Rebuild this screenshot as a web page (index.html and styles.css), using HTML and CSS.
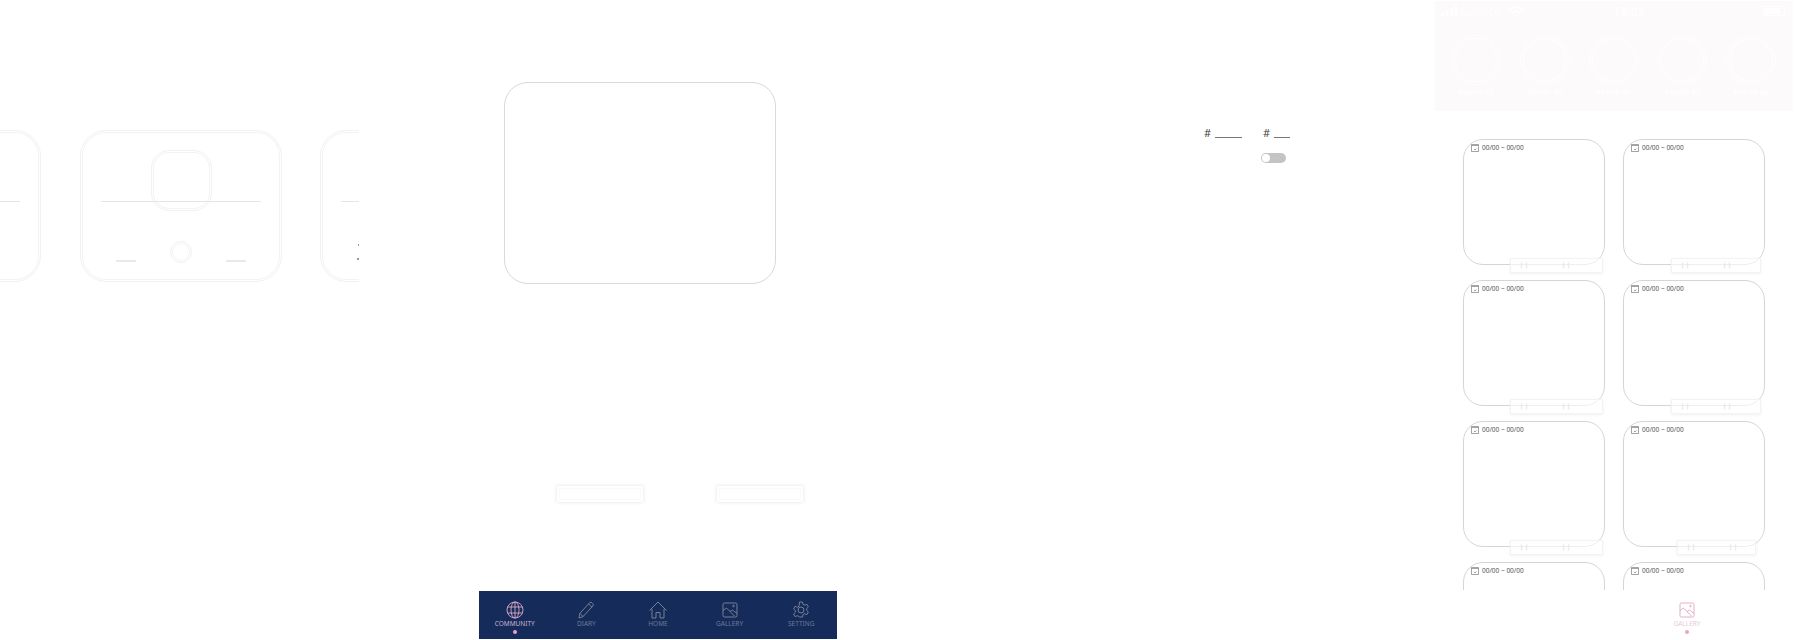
FILE: index.html
```html
<!DOCTYPE html>
<html lang="en">
<head>
    <meta charset="UTF-8">
    <meta name="viewport" content="width=device-width, initial-scale=1.0">
    <title>Design board</title>
    <link rel="stylesheet" href="styles.css">
</head>
<body>
    <div class="board">
        <!-- carousel artboard -->
        <section class="frame frame-carousel">
            <div class="slide slide-left"><i class="slide-line"></i></div>
            <div class="slide slide-main">
                <div class="slide-thumb"></div>
                <i class="slide-line"></i>
                <div class="slide-foot">
                    <i class="foot-line"></i>
                    <div class="foot-dot"></div>
                    <i class="foot-line"></i>
                </div>
            </div>
            <div class="slide slide-right">
                <i class="slide-line"></i>
                <div class="slide-marks"><i></i><i></i><i></i></div>
            </div>
        </section>

        <!-- community artboard -->
        <section class="frame frame-community">
            <div class="big-card"></div>
            <div class="ghost-row">
                <div class="ghost-btn"></div>
                <div class="ghost-btn"></div>
            </div>
            <nav class="tabbar">
                <div class="tab tab-active">
                    <svg viewBox="0 0 18 18"><circle cx="9" cy="9" r="8"/><ellipse cx="9" cy="9" rx="4" ry="8"/><path d="M1.6 6h14.8M1.6 12h14.8M9 1v16"/></svg>
                    <span>COMMUNITY</span>
                    <i class="tab-dot"></i>
                </div>
                <div class="tab">
                    <svg viewBox="0 0 18 18"><path d="M2 17l.8-4.6L12.6 1.8a1.8 1.8 0 0 1 2.5 0l.7.7a1.8 1.8 0 0 1 0 2.5L6 15.6z M3 12.4l3 3M11.6 3l3.4 3.2"/></svg>
                    <span>DIARY</span>
                </div>
                <div class="tab">
                    <svg viewBox="0 0 18 18"><path d="M.5 9.5L9 1l8.500 8.500M3 8v9h4v-5.500h4V17h4V8"/></svg>
                    <span>HOME</span>
                </div>
                <div class="tab">
                    <svg viewBox="0 0 18 18"><rect x="2" y="2" width="14" height="14" rx="1.500"/><path d="M2 9.500l3.500-2.500 8 8M9 10.500l2.500-1.500 4.500 3.500"/><circle cx="12.500" cy="5" r=".8"/></svg>
                    <span>GALLERY</span>
                </div>
                <div class="tab">
                    <svg viewBox="0 0 18 18"><path d="M7.500 1h3l.5 2.300 1.700.9 2.200-.9 1.500 2.600-1.700 1.600v1.900l1.700 1.600-1.500 2.600-2.200-.9-1.700.9-.5 2.400h-3L7 15.600l-1.700-.9-2.200.9-1.500-2.600 1.700-1.600V9.500L1.600 7.900l1.500-2.600 2.200.9L7 5.300z"/><circle cx="9" cy="9" r="3"/></svg>
                    <span>SETTING</span>
                </div>
            </nav>
        </section>

        <!-- settings artboard -->
        <section class="frame frame-tags">
            <div class="tag-row">
                <div class="tag"><span>#</span><i class="tag-line tag-line-long"></i></div>
                <div class="tag"><span>#</span><i class="tag-line"></i></div>
            </div>
            <div class="toggle"><i></i></div>
        </section>

        <!-- gallery artboard -->
        <section class="frame frame-gallery">
            <header class="hero">
                <div class="status">
                    <div class="status-left">
                        <svg class="signal" viewBox="0 0 17 10"><rect x="0" y="7" width="3" height="3"/><rect x="4.500" y="5" width="3" height="5"/><rect x="9" y="2.500" width="3" height="7.500"/><rect x="13.500" y="0" width="3" height="10"/></svg>
                        <span>Service</span>
                        <svg class="wifi" viewBox="0 0 16 11"><path d="M0 3.500a11 11 0 0 1 16 0l-1.500 1.600a9 9 0 0 0-13 0zM3 6.500a7 7 0 0 1 10 0l-1.500 1.600a5 5 0 0 0-7 0zM6 9.500a3 3 0 0 1 4 0L8 11z"/></svg>
                    </div>
                    <span class="status-time">19:02</span>
                    <div class="battery"><i></i></div>
                </div>
                <div class="stories">
                    <div class="story"><div class="story-ring"></div><span>BRAND 4D</span></div>
                    <div class="story"><div class="story-ring"></div><span>BRAND 4D</span></div>
                    <div class="story"><div class="story-ring"></div><span>BRAND 4D</span></div>
                    <div class="story"><div class="story-ring"></div><span>BRAND 4D</span></div>
                    <div class="story"><div class="story-ring"></div><span>BRAND 4D</span></div>
                </div>
            </header>
            <div class="albums">
                <div class="album">
                    <div class="album-date"><svg viewBox="0 0 8 8"><path d="M.5 1.500h7v6h-7zM.5 1.500V.5M7.500 1.500V.5M.5.500h7M3 5l1 1 1.500-1.500"/></svg>00/00 ~ 00/00</div>
                    <div class="album-over"><span>❙❙</span><span>❙❙</span></div>
                </div>
                <div class="album">
                    <div class="album-date"><svg viewBox="0 0 8 8"><path d="M.5 1.500h7v6h-7zM.5 1.500V.5M7.500 1.500V.5M.5.500h7M3 5l1 1 1.500-1.500"/></svg>00/00 ~ 00/00</div>
                    <div class="album-over album-over-mid"><span>❙❙</span><span>❙❙</span></div>
                </div>
                <div class="album">
                    <div class="album-date"><svg viewBox="0 0 8 8"><path d="M.5 1.500h7v6h-7zM.5 1.500V.5M7.500 1.500V.5M.5.500h7M3 5l1 1 1.500-1.500"/></svg>00/00 ~ 00/00</div>
                    <div class="album-over"><span>❙❙</span><span>❙❙</span></div>
                </div>
                <div class="album">
                    <div class="album-date"><svg viewBox="0 0 8 8"><path d="M.5 1.500h7v6h-7zM.5 1.500V.5M7.500 1.500V.5M.5.500h7M3 5l1 1 1.500-1.500"/></svg>00/00 ~ 00/00</div>
                    <div class="album-over album-over-mid"><span>❙❙</span><span>❙❙</span></div>
                </div>
                <div class="album">
                    <div class="album-date"><svg viewBox="0 0 8 8"><path d="M.5 1.500h7v6h-7zM.5 1.500V.5M7.500 1.500V.5M.5.500h7M3 5l1 1 1.500-1.500"/></svg>00/00 ~ 00/00</div>
                    <div class="album-over"><span>❙❙</span><span>❙❙</span></div>
                </div>
                <div class="album">
                    <div class="album-date"><svg viewBox="0 0 8 8"><path d="M.5 1.500h7v6h-7zM.5 1.500V.5M7.500 1.500V.5M.5.500h7M3 5l1 1 1.500-1.500"/></svg>00/00 ~ 00/00</div>
                    <div class="album-over album-over-small"><span>❙❙</span><span>❙❙</span></div>
                </div>
                <div class="album">
                    <div class="album-date"><svg viewBox="0 0 8 8"><path d="M.5 1.500h7v6h-7zM.5 1.500V.5M7.500 1.500V.5M.5.500h7M3 5l1 1 1.500-1.500"/></svg>00/00 ~ 00/00</div>
                </div>
                <div class="album">
                    <div class="album-date"><svg viewBox="0 0 8 8"><path d="M.5 1.500h7v6h-7zM.5 1.500V.5M7.500 1.500V.5M.5.500h7M3 5l1 1 1.500-1.500"/></svg>00/00 ~ 00/00</div>
                </div>
            </div>
            <div class="solo-tab">
                <div class="tab tab-solo">
                    <svg viewBox="0 0 18 18"><rect x="2" y="2" width="14" height="14" rx="1.500"/><path d="M2 9.500l3.500-2.500 8 8M9 10.500l2.500-1.500 4.500 3.500"/><circle cx="12.500" cy="5" r=".8"/></svg>
                    <span>GALLERY</span>
                    <i class="tab-dot"></i>
                </div>
            </div>
        </section>
    </div>
</body>
</html>
```

FILE: styles.css
```css
body {
    margin: 0;
    background: #fff;
    font-family: "Noto Sans", sans-serif;
}
.board {
    position: relative;
    width: 1794px;
    height: 640px;
    overflow: hidden;
}
.frame { position: absolute; top: 0; height: 640px; }
.frame-carousel { left: 0; width: 359px; overflow: hidden; }
.frame-community { left: 479px; width: 358px; }
.frame-tags { left: 1204px; width: 90px; }
.frame-gallery { left: 1435px; width: 359px; }

/* carousel */
.slide {
    position: absolute;
    top: 130px;
    width: 202px;
    height: 152px;
    box-sizing: border-box;
    border: 1px solid #f2f2f2;
    border-radius: 26px;
    box-shadow: inset 0 0 0 1px #fff, inset 0 0 0 2px #f3f3f3;
}
.slide-left { left: -161px; }
.slide-main { left: 80px; }
.slide-right { left: 320px; }
.slide-line {
    position: absolute;
    top: 70px;
    left: 20px;
    width: 160px;
    height: 1px;
    background: #e5e5e5;
}
.slide-thumb {
    position: absolute;
    top: 19px;
    left: 70px;
    width: 61px;
    height: 61px;
    box-sizing: border-box;
    border: 1px solid #f2f2f2;
    border-radius: 18px;
    box-shadow: inset 0 0 0 1px #fff, inset 0 0 0 2px #f3f3f3;
}
.slide-foot {
    position: absolute;
    top: 110px;
    left: 35px;
    width: 130px;
    display: flex;
    justify-content: space-between;
    align-items: flex-end;
}
.foot-line { width: 20px; height: 2px; background: #e9e9e9; }
.foot-dot {
    width: 22px;
    height: 22px;
    box-sizing: border-box;
    border: 1px solid #f2f2f2;
    border-radius: 50%;
    box-shadow: inset 0 0 0 1px #fff, inset 0 0 0 2px #f3f3f3;
    margin-bottom: -1px;
}
.slide-marks {
    position: absolute;
    top: 113px;
    left: 36px;
    display: flex;
    flex-direction: column;
    align-items: flex-end;
    gap: 5px;
    width: 3px;
}
.slide-marks i { height: 2px; width: 2px; background: #999; }
.slide-marks i:nth-child(2) { width: 1px; }
.slide-marks i:nth-child(3) { width: 3px; }

/* community */
.big-card {
    position: absolute;
    top: 82px;
    left: 25px;
    width: 272px;
    height: 202px;
    box-sizing: border-box;
    border: 1px solid #d9d9d9;
    border-radius: 24px;
}
.ghost-row {
    position: absolute;
    top: 486px;
    left: 78px;
    display: flex;
    gap: 74px;
}
.ghost-btn {
    width: 86px;
    height: 16px;
    box-sizing: border-box;
    border: 2px solid #fff;
    background: #fff;
    box-shadow: 0 0 4px rgba(0,0,0,0.12), inset 0 0 2px rgba(0,0,0,0.08);
}
.tabbar {
    position: absolute;
    top: 591px;
    left: 0;
    width: 358px;
    height: 48px;
    display: flex;
    background: #152c5a;
}
.tab {
    position: relative;
    flex: 1;
    display: flex;
    flex-direction: column;
    align-items: center;
    padding-top: 10px;
    color: #6f7a92;
    font-size: 6.5px;
    line-height: 8px;
}
.tab svg {
    width: 18px;
    height: 18px;
    fill: none;
    stroke: #808898;
    stroke-width: 0.9;
    margin-bottom: 1px;
}
.tab-active { color: #c9afd0; }
.tab-active svg { stroke: #dca8c8; }
.tab-dot {
    width: 4px;
    height: 4px;
    border-radius: 50%;
    background: #e5a6c6;
    margin-top: 2px;
}

/* tags */
.tag-row {
    position: absolute;
    top: 126px;
    left: 0;
    display: flex;
    gap: 21px;
}
.tag {
    display: flex;
    align-items: flex-end;
    gap: 4px;
    font-size: 11px;
    line-height: 14px;
    color: #444;
}
.tag-line { width: 16px; height: 1px; background: #777; margin-bottom: 2px; }
.tag-line-long { width: 27px; }
.toggle {
    position: absolute;
    top: 153px;
    left: 57px;
    width: 25px;
    height: 10px;
    border-radius: 5px;
    background: #c4c4c4;
}
.toggle i {
    display: block;
    width: 8px;
    height: 8px;
    margin: 1px;
    border-radius: 50%;
    background: #fff;
}

/* gallery */
.hero {
    position: absolute;
    top: 1px;
    left: 0;
    width: 358px;
    height: 110px;
    background: #fcfafa;
    color: #fff;
}
.status {
    height: 20px;
    display: flex;
    align-items: center;
    justify-content: space-between;
    padding: 0 8px 0 6px;
    font-size: 12px;
}
.status-left { display: flex; align-items: center; gap: 3px; width: 92px; }
.signal { width: 17px; height: 10px; fill: #fff; }
.wifi { width: 16px; height: 11px; fill: #fff; margin-left: 4px; }
.status-time { font-weight: 600; margin-right: 38px; }
.battery {
    width: 22px;
    height: 10px;
    box-sizing: border-box;
    border: 1px solid #fff;
    padding: 1px;
}
.battery i { display: block; width: 15px; height: 6px; background: #fff; }
.stories {
    display: flex;
    justify-content: space-between;
    padding: 14px 17px 0 16px;
}
.story {
    display: flex;
    flex-direction: column;
    align-items: center;
    gap: 3px;
    font-size: 7px;
    font-weight: 700;
    line-height: 10px;
    white-space: nowrap;
}
.story-ring {
    width: 50px;
    height: 50px;
    box-sizing: border-box;
    border: 1px solid #fff;
    border-radius: 50%;
    box-shadow: inset 0 0 0 2px #fcfafa, inset 0 0 0 3px #fff;
}
.albums {
    position: absolute;
    top: 139px;
    left: 28px;
    width: 302px;
    height: 451px;
    overflow: hidden;
    display: grid;
    grid-template-columns: 142px 142px;
    grid-auto-rows: 126px;
    column-gap: 18px;
    row-gap: 15px;
}
.album {
    position: relative;
    box-sizing: border-box;
    border: 1px solid #d5d5d5;
    border-radius: 20px;
}
.album-date {
    display: flex;
    align-items: center;
    gap: 3px;
    padding: 4px 0 0 7px;
    font-size: 6.5px;
    line-height: 8px;
    color: #555;
}
.album-date svg {
    width: 8px;
    height: 8px;
    fill: none;
    stroke: #666;
    stroke-width: 0.6;
}
.album-over {
    position: absolute;
    right: 1px;
    bottom: -9px;
    width: 93px;
    height: 15px;
    box-sizing: border-box;
    display: flex;
    gap: 32px;
    padding-left: 8px;
    background: rgba(255,255,255,0.6);
    border: 1px solid #f3f3f3;
    box-shadow: 0 1px 3px rgba(0,0,0,0.06);
    font-size: 6px;
    line-height: 13px;
    color: #e8e8e8;
}
.album-over-mid { right: 3px; width: 90px; }
.album-over-small { right: 8px; width: 79px; }
.solo-tab {
    position: absolute;
    top: 591px;
    left: 216px;
    width: 72px;
    height: 48px;
    display: flex;
}
.tab-solo { color: #edc6da; }
.tab-solo svg { stroke: #dfa6c3; }
```
